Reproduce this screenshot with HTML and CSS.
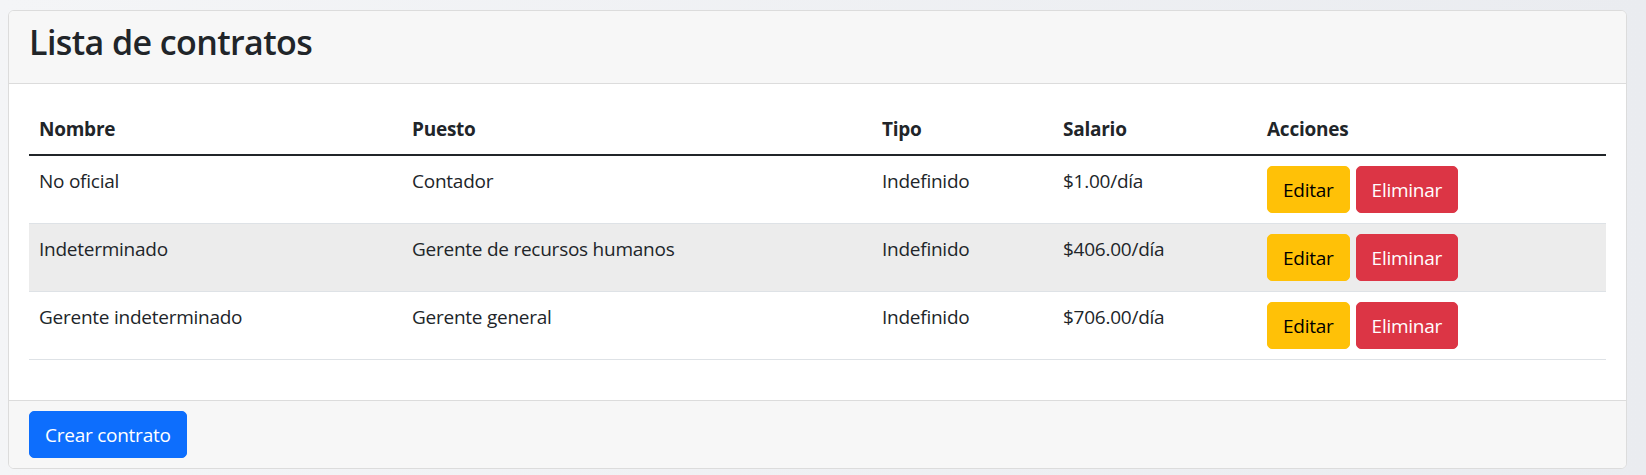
FILE: index.html
```html
<!DOCTYPE html>
<html lang="es">
<head>
<meta charset="utf-8">
<title>Lista de contratos</title>
<link rel="stylesheet" href="styles.css">
</head>
<body>
<div class="card">
  <div class="card-header">
    <h3 class="title">Lista de contratos</h3>
  </div>
  <div class="card-body">
    <table class="table">
      <thead>
        <tr>
          <th class="col-nombre">Nombre</th>
          <th class="col-puesto">Puesto</th>
          <th class="col-tipo">Tipo</th>
          <th class="col-salario">Salario</th>
          <th class="col-acciones">Acciones</th>
        </tr>
      </thead>
      <tbody>
        <tr>
          <td>No oficial</td>
          <td>Contador</td>
          <td>Indefinido</td>
          <td>$1.00/día</td>
          <td><div class="actions"><button class="btn btn-warning">Editar</button><button class="btn btn-danger">Eliminar</button></div></td>
        </tr>
        <tr class="striped">
          <td>Indeterminado</td>
          <td>Gerente de recursos humanos</td>
          <td>Indefinido</td>
          <td>$406.00/día</td>
          <td><div class="actions"><button class="btn btn-warning">Editar</button><button class="btn btn-danger">Eliminar</button></div></td>
        </tr>
        <tr>
          <td>Gerente indeterminado</td>
          <td>Gerente general</td>
          <td>Indefinido</td>
          <td>$706.00/día</td>
          <td><div class="actions"><button class="btn btn-warning">Editar</button><button class="btn btn-danger">Eliminar</button></div></td>
        </tr>
      </tbody>
    </table>
  </div>
  <div class="card-footer">
    <button class="btn btn-primary">Crear contrato</button>
  </div>
</div>
</body>
</html>
```

FILE: styles.css
```css
html, body {
  height: 100%;
}
body {
  margin: 0;
  padding: 10px 19px 0 8px;
  box-sizing: border-box;
  background: linear-gradient(to right, #f4f5f7, #eaecf0);
  font-family: "Segoe UI", "Open Sans", "Noto Sans", sans-serif;
  font-size: 19px;
  letter-spacing: -0.25px;
  line-height: 30px;
  color: #212529;
}
.card {
  background: #fff;
  border: 1px solid #dcdcdc;
  border-radius: 6px;
  overflow: hidden;
}
.card-header {
  background: #f7f7f7;
  border-bottom: 1px solid #dcdcdc;
  padding: 10px 20px;
}
.title {
  margin: 0 0 10px;
  font-size: 34px;
  line-height: 42px;
  font-weight: 600;
  letter-spacing: -0.6px;
}
.card-body {
  padding: 20px;
}
.table {
  width: 100%;
  border-collapse: collapse;
  margin-bottom: 20px;
}
.table th,
.table td {
  padding: 10px;
  text-align: left;
  vertical-align: top;
}
.table th {
  font-weight: 700;
  border-bottom: 2px solid #212529;
}
.table td {
  border-bottom: 1px solid #dee2e6;
}
.col-nombre { width: 353px; }
.col-puesto { width: 450px; }
.col-tipo { width: 161px; }
.col-salario { width: 184px; }
.striped td {
  background: #ececec;
}
.actions {
  display: flex;
  gap: 6px;
}
.btn {
  font-family: inherit;
  font-size: 19px;
  letter-spacing: -0.25px;
  line-height: 30px;
  padding: 7.5px 15px;
  border: 1px solid transparent;
  border-radius: 5px;
  height: 47px;
  cursor: pointer;
}
.btn-warning {
  background: #ffc107;
  border-color: #ffc107;
  color: #000;
}
.btn-danger {
  background: #dc3545;
  border-color: #dc3545;
  color: #fff;
}
.btn-primary {
  background: #0d6efd;
  border-color: #0d6efd;
  color: #fff;
}
.card-footer {
  background: #f7f7f7;
  border-top: 1px solid #dcdcdc;
  padding: 10px 20px;
}
```
